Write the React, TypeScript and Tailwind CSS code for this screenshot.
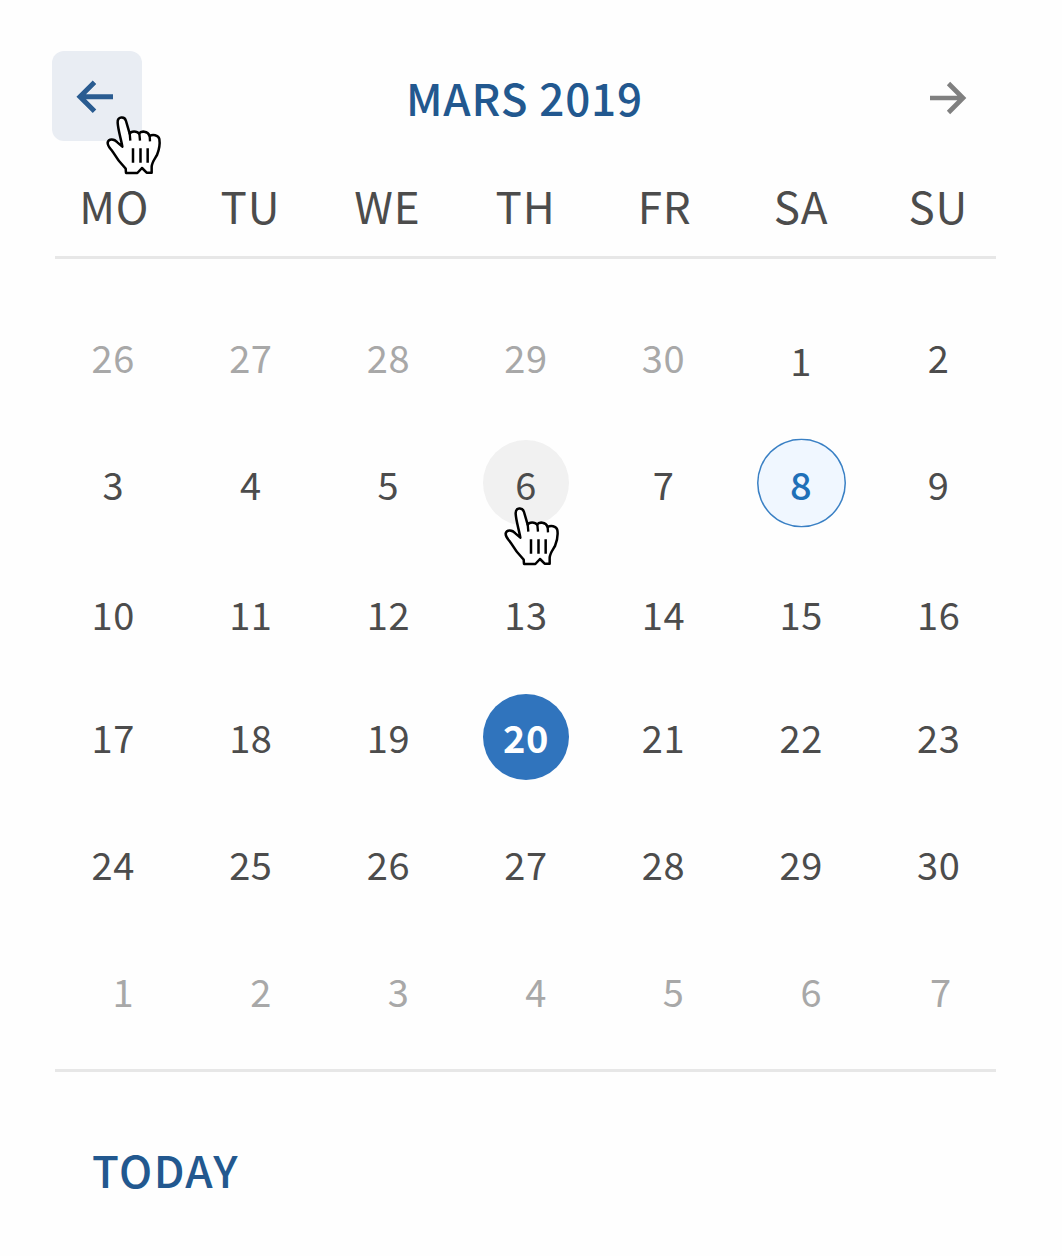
const weekdays = [
  { label: "MO", shift: "translate-x-[1px]" },
  { label: "TU", shift: "-translate-x-[0.5px]" },
  { label: "WE", shift: "-translate-x-[1px]" },
  { label: "TH", shift: "-translate-x-[0.5px]" },
  { label: "FR", shift: "translate-x-[1px]" },
  { label: "SA", shift: "translate-x-0" },
  { label: "SU", shift: "-translate-x-[0.5px]" },
];

const weeks = [
  { days: [26, 27, 28, 29, 30, 1, 2], shift: "translate-y-[1px]" },
  { days: [3, 4, 5, 6, 7, 8, 9], shift: "translate-y-[1px]" },
  { days: [10, 11, 12, 13, 14, 15, 16], shift: "translate-y-[4px]" },
  { days: [17, 18, 19, 20, 21, 22, 23], shift: "translate-y-0" },
  { days: [24, 25, 26, 27, 28, 29, 30], shift: "translate-y-0" },
  { days: [1, 2, 3, 4, 5, 6, 7], shift: "translate-y-0" },
];

function HandCursor({ className }: { className: string }) {
  return (
    <svg className={className} width="59" height="62" viewBox="195 222 177 186" fill="none" stroke="#000" strokeLinejoin="round">
      <path
        d="M247 320 C244 300 234 270 233 248 C232 229 254 228 258 243 L269 281 C273 272 291 272 297 281 C303 272 323 272 329 288 C337 283 355 284 358 297 C361 315 357 330 351 345 C344 357 336 366 335 380 L335 398 L320 398 L306 384 L292 399 L258 399 L257 386 C243 372 228 352 218 335 C210 324 202 318 203 307 C206 295 223 296 232 307 Z"
        fill="#fff"
        strokeWidth="7.5"
      />
      <path d="M269 279 L271 302 M298 280 L300 302 M329 287 L330 304" strokeWidth="7" />
      <path d="M279 325 V368 M301.5 325 V368 M323 325 V368" strokeWidth="7.5" />
    </svg>
  );
}

function Day({ week, col, day }: { week: number; col: number; day: number }) {
  const shift = weeks[week].shift;
  if (week === 1 && col === 3)
    return (
      <span className="relative flex size-[86px] shrink-0 items-center justify-center rounded-full bg-[#f1f1f1]">
        <span className={shift}>{day}</span>
        <HandCursor className="absolute left-[20px] top-[65px]" />
      </span>
    );
  if (week === 1 && col === 5)
    return (
      <span className="flex size-[89px] shrink-0 translate-y-[0.5px] items-center justify-center rounded-full bg-[#f0f7ff] font-medium text-[#1f70b8] shadow-[inset_0_0_0_1.5px_#3a80c4]">
        <span>{day}</span>
      </span>
    );
  if (week === 3 && col === 3)
    return (
      <span className="flex size-[86px] shrink-0 items-center justify-center rounded-full bg-[#3074bd] font-bold text-white">
        <span className={shift}>{day}</span>
      </span>
    );
  if (week === 5) return <span className={`w-[42px] text-right text-[#a8a8a8] ${col === 6 ? "pr-[8px]" : ""} ${shift}`}>{day}</span>;
  if (week === 0 && col < 5) return <span className={`text-[#a8a8a8] ${shift}`}>{day}</span>;
  if (week === 0 && col === 5) return <span className="translate-y-[4px]">{day}</span>;
  return <span className={shift}>{day}</span>;
}

export default function App() {
  return (
    <main className="flex h-[1256px] w-[1062px] flex-col bg-[#fefefe] pt-[51px] font-['Noto_Sans_CJK_JP',sans-serif] text-[#4c4c4c]">
      <header className="grid h-[90px] grid-cols-[90px_1fr_90px] items-center pl-[52px] pr-[61px]">
        <button className="relative flex size-[90px] items-center justify-center rounded-xl bg-[#e9edf3]">
          <svg width="38" height="36" viewBox="0 0 38 36" className="-translate-x-[2px] translate-y-[0.7px]" fill="none" stroke="#2a5c91" strokeWidth="5">
            <path d="M18.5 3.5 L4 18 L18.5 32.5 M4 18 H37" />
          </svg>
          <HandCursor className="absolute left-[53px] top-[63px]" />
        </button>
        <h1 className="translate-x-[-2px] translate-y-[1px] text-center text-[44px] font-medium tracking-[0.9px] text-[#22588f]">MARS 2019</h1>
        <svg width="38" height="36" viewBox="0 0 38 36" className="ml-[18px] translate-y-[2px]" fill="none" stroke="#808080" strokeWidth="4.7">
          <path d="M19.5 3.5 L34 18 L19.5 32.5 M34 18 H1" />
        </svg>
      </header>
      <div className="ml-[44.5px] grid w-[963px] grid-cols-7 pt-[30px] text-[44px] leading-[68px] tracking-[0.8px]">
        {weekdays.map(({ label, shift }) => (
          <div key={label} className={`text-center ${shift}`}>{label}</div>
        ))}
      </div>
      <div className="ml-[55px] mt-[17px] h-[3px] w-[941px] shrink-0 bg-[#e7e7e7]" />
      <div className="ml-[44.5px] mt-[33px] w-[963px] text-[38px] leading-[50px] tracking-[0.6px]">
        {weeks.map((w, i) => (
          <div key={i} className="grid h-[127px] grid-cols-7">
            {w.days.map((d, j) => (
              <div key={j} className="flex items-center justify-center">
                <Day week={i} col={j} day={d} />
              </div>
            ))}
          </div>
        ))}
      </div>
      <div className="ml-[55px] mt-[15px] h-[3px] w-[941px] shrink-0 bg-[#e7e7e7]" />
      <footer className="pl-[92px] pt-[63px] text-[44px] font-medium leading-[68px] tracking-[1.4px] text-[#22588f]">TODAY</footer>
    </main>
  );
}
